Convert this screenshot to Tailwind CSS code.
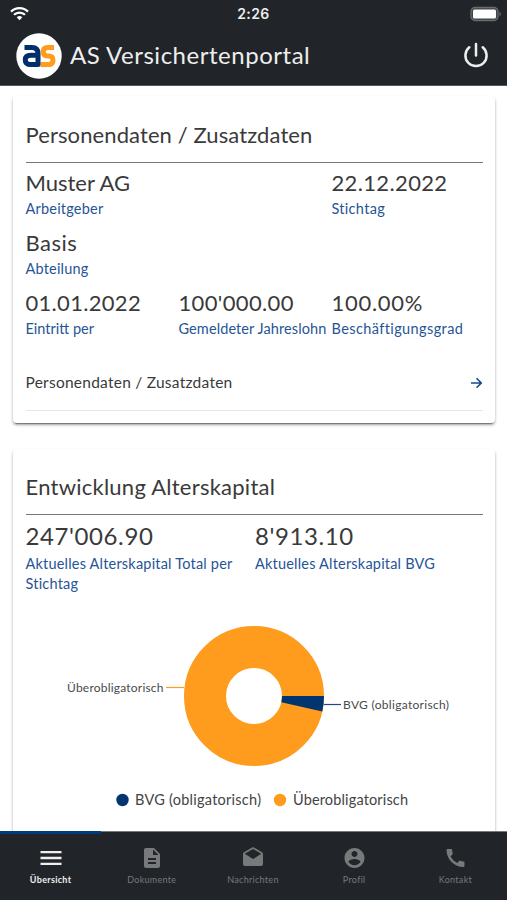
<!DOCTYPE html>
<html lang="de">
<head>
    <meta charset="UTF-8">
    <meta name="viewport" content="width=device-width, initial-scale=1.0">
    <title>AS Versichertenportal</title>
    <script src="https://cdn.jsdelivr.net/npm/@tailwindcss/browser@4"></script>
</head>
<body class="h-screen flex flex-col overflow-hidden bg-white font-['Lato','Noto_Sans',sans-serif] text-[#3a3a3a] whitespace-nowrap">
    <header class="h-[86px] shrink-0 bg-[#212529] border-b border-[#55585b]">
        <!-- Status bar -->
        <div class="grid grid-cols-3 items-center h-[27px] px-[10px]">
            <svg class="w-[19px] h-[15px]" viewBox="0 0 19 15" fill="none" stroke="#fff" stroke-width="2.3">
                <path d="M1 5.6a12 12 0 0 1 17 0M4 8.8a7.8 7.8 0 0 1 11 0"/>
                <path d="M9.500 14.200 6.700 11.300a4 4 0 0 1 5.600 0z" fill="#fff" stroke="none"/>
            </svg>
            <div class="text-center font-['Inter'] font-semibold text-[14px] tracking-[0.4px] text-[#eee]">2:26</div>
            <svg class="w-[32px] h-[16px] justify-self-end -mr-[5px]" viewBox="0 0 32 16">
                <rect x="1" y="1.500" width="27" height="13" rx="4" fill="#404347" stroke="#696b6e" stroke-width="1.300"/>
                <rect x="3" y="3.500" width="23" height="9" rx="1.500" fill="#fff"/>
                <path d="M29.500 5.500q3 2.500 0 5z" fill="#696b6e"/>
            </svg>
        </div>
        <!-- Title bar -->
        <div class="flex items-center h-[57px] pl-4 pr-[17px] text-[#eee]">
            <svg class="w-[46px] h-[46px] shrink-0" viewBox="0 0 46 46">
                <circle cx="23" cy="23" r="22.700" fill="#fff"/>
                <g fill="none" stroke-width="5" stroke-linejoin="round">
                    <path d="M38 14.500h-6.500q-4.200 0-4.200 4.200t4.200 4.200h1.300q4.200 0 4.200 4.300t-4.200 4.300h-8.300" stroke="#ff9c1c"/>
                    <path d="M8.500 14.500h7.500q6 0 6 6v11h-7q-5.700 0-5.700-4.600t5.700-4.600h7" stroke="#002f6c"/>
                </g>
            </svg>
            <h1 class="ml-2 pb-[2px] text-[24px] tracking-[0.52px]">AS Versichertenportal</h1>
            <svg class="ml-auto mb-px w-[28px] h-[28px]" viewBox="0 0 28 28" fill="none" stroke="#eee" stroke-width="2.500" stroke-linecap="round">
                <path d="M14 3v11.500M7.300 6.300a10.600 10.600 0 1 0 13.400 0"/>
            </svg>
        </div>
    </header>

    <main class="flex-1 min-h-0 overflow-hidden px-[13px] pt-[10px]">
        <section class="h-[327px] mr-[-1px] rounded px-[12.5px] shadow-[0_3px_1px_-2px_rgba(0,0,0,0.35),0_2px_3px_0_rgba(0,0,0,0.35)]">
            <h2 class="h-[67px] pt-[26px] leading-[26px] text-[22px] tracking-[0.1px] border-b border-[#777]">Personendaten / Zusatzdaten</h2>
            <div class="grid grid-cols-[153px_153px_1fr] gap-y-[8px] pt-[7px]">
                <div class="col-span-2">
                    <p class="text-[22px] leading-[26px]">Muster AG</p>
                    <p class="text-[14.5px] leading-[26px] text-[#265596] tracking-[0.2px]">Arbeitgeber</p>
                </div>
                <div>
                    <p class="text-[22px] leading-[26px] tracking-[0.35px]">22.12.2022</p>
                    <p class="text-[14.5px] leading-[26px] text-[#265596] tracking-[0.3px]">Stichtag</p>
                </div>
                <div class="col-span-3">
                    <p class="text-[22px] leading-[26px] tracking-[0.5px]">Basis</p>
                    <p class="text-[14.5px] leading-[26px] text-[#265596] tracking-[0.2px]">Abteilung</p>
                </div>
                <div>
                    <p class="text-[22px] leading-[26px] tracking-[0.3px]">01.01.2022</p>
                    <p class="text-[14.5px] leading-[26px] text-[#265596]">Eintritt per</p>
                </div>
                <div>
                    <p class="text-[22px] leading-[26px] tracking-[0.35px]">100'000.00</p>
                    <p class="text-[14.5px] leading-[26px] text-[#265596] tracking-[0.1px]">Gemeldeter Jahreslohn</p>
                </div>
                <div>
                    <p class="text-[22px] leading-[26px] tracking-[0.7px]">100.00%</p>
                    <p class="text-[14.5px] leading-[26px] text-[#265596] tracking-[0.4px]">Beschäftigungsgrad</p>
                </div>
            </div>
            <div class="mt-[13px] h-[56px] flex items-center justify-between border-b border-[#e6e6e6]">
                <span class="pt-px text-[15.5px] tracking-[0.25px]">Personendaten / Zusatzdaten</span>
                <svg class="w-[12px] h-[12px]" viewBox="0 0 12 12" fill="none" stroke="#174a86" stroke-width="1.600">
                    <path d="M0 6h10M5.500 1.200 10.300 6 5.500 10.800"/>
                </svg>
            </div>
        </section>

        <section class="mt-[26px] h-[420px] mr-[-1px] rounded px-[12.5px] shadow-[0_2px_3px_0_rgba(0,0,0,0.35)]">
            <h2 class="h-[66px] pt-[25px] leading-[26px] text-[22px] tracking-[0.25px] border-b border-[#777]">Entwicklung Alterskapital</h2>
            <div class="grid grid-cols-2 gap-x-[2px] pt-[7px]">
                <div>
                    <p class="text-[24px] leading-[28px] tracking-[0.6px]">247'006.90</p>
                    <p class="pt-[4px] text-[14.5px] leading-[20px] text-[#265596] tracking-[0.2px]">Aktuelles Alterskapital Total per<br>Stichtag</p>
                </div>
                <div>
                    <p class="text-[24px] leading-[28px] tracking-[0.6px]">8'913.10</p>
                    <p class="pt-[4px] text-[14.5px] leading-[20px] text-[#265596] tracking-[0.2px]">Aktuelles Alterskapital BVG</p>
                </div>
            </div>
            <!-- Donut chart -->
            <svg class="w-full h-[192px] mt-[30px] font-['Lato','Noto_Sans',sans-serif]" viewBox="26 624 457 192">
                <circle cx="254" cy="696" r="49" fill="none" stroke="#ff9b1d" stroke-width="42"/>
                <path d="M282 696H324A70 70 0 0 1 322.300 711.500L281.300 702.200A28 28 0 0 0 282 696Z" fill="#00356f"/>
                <path d="M166 687.500h18" stroke="#ff9b1d" stroke-width="1.200"/>
                <path d="M324 704.500h17" stroke="#1c4a86" stroke-width="1.200"/>
                <g fill="#4a4a4a" font-size="12">
                    <text x="67" y="691.500" textLength="96.500">Überobligatorisch</text>
                    <text x="343" y="708.500" textLength="106">BVG (obligatorisch)</text>
                </g>
                <circle cx="122.500" cy="800" r="6.200" fill="#00356f"/>
                <circle cx="280" cy="800" r="6.200" fill="#ff9b1d"/>
                <g fill="#444" font-size="14.500">
                    <text x="135" y="805" textLength="126">BVG (obligatorisch)</text>
                    <text x="293" y="805" textLength="115">Überobligatorisch</text>
                </g>
            </svg>
        </section>
    </main>

    <nav class="relative h-[68px] shrink-0 grid grid-cols-5 pr-px bg-[#212529] text-[#77797b] text-[9px] text-center">
        <div class="absolute left-0 -top-px w-full h-px bg-[#77797b]"></div>
        <div class="absolute left-0 -top-px w-1/5 h-[3px] bg-[#003a80]"></div>
        <a class="flex flex-col items-center pt-[12px] text-[#eee]">
            <svg class="w-[28px] h-[28px]" viewBox="0 0 24 24" fill="currentColor"><path d="M3 18h18v-2H3v2zm0-5h18v-2H3v2zm0-7v2h18V6H3z"/></svg>
            <span class="mt-px leading-[14px] font-bold tracking-[0.3px]">Übersicht</span>
        </a>
        <a class="flex flex-col items-center pt-[14px]">
            <svg class="w-[24px] h-[24px]" viewBox="0 0 24 24" fill="currentColor"><path d="M14 2H6c-1.100 0-1.990.9-1.990 2L4 20c0 1.100.89 2 1.990 2H18c1.100 0 2-.9 2-2V8l-6-6zm2 16H8v-2h8v2zm0-4H8v-2h8v2zm-3-5V3.500L18.500 9H13z"/></svg>
            <span class="mt-[3px] leading-[14px] tracking-[0.3px]">Dokumente</span>
        </a>
        <a class="flex flex-col items-center pt-[14px]">
            <svg class="w-[24px] h-[24px]" viewBox="0 0 24 24" fill="currentColor"><path d="M21.990 8c0-.72-.37-1.350-.94-1.700L12 1 2.950 6.300C2.380 6.650 2 7.280 2 8v10c0 1.100.9 2 2 2h16c1.100 0 2-.9 2-2l-.01-10zM12 13 3.740 7.840 12 3l8.260 4.840L12 13z"/></svg>
            <span class="mt-[3px] leading-[14px] tracking-[0.3px]">Nachrichten</span>
        </a>
        <a class="flex flex-col items-center pt-[14px]">
            <svg class="w-[25px] h-[24px]" viewBox="0 0 24 24" fill="currentColor"><path d="M12 2C6.480 2 2 6.480 2 12s4.480 10 10 10 10-4.480 10-10S17.520 2 12 2zm0 3c1.660 0 3 1.340 3 3s-1.340 3-3 3-3-1.340-3-3 1.340-3 3-3zm0 14.200c-2.500 0-4.710-1.280-6-3.220.03-1.990 4-3.080 6-3.080 1.990 0 5.970 1.090 6 3.080-1.290 1.940-3.500 3.220-6 3.220z"/></svg>
            <span class="mt-[3px] leading-[14px] tracking-[0.3px]">Profil</span>
        </a>
        <a class="flex flex-col items-center pt-[14px]">
            <svg class="w-[25px] h-[24px]" viewBox="0 0 24 24" fill="currentColor"><path d="M20.010 15.380c-1.230 0-2.420-.2-3.530-.56-.35-.12-.74-.03-1.010.24l-1.570 1.970c-2.830-1.350-5.480-3.900-6.890-6.830l1.950-1.660c.27-.28.35-.67.24-1.020-.37-1.110-.56-2.300-.56-3.530 0-.54-.45-.99-.99-.99H4.190C3.650 3 3 3.240 3 3.990 3 13.280 10.730 21 20.010 21c.71 0 .99-.63.99-1.180v-3.450c0-.54-.45-.99-.99-.99z"/></svg>
            <span class="mt-[3px] leading-[14px] tracking-[0.3px]">Kontakt</span>
        </a>
    </nav>
</body>
</html>
